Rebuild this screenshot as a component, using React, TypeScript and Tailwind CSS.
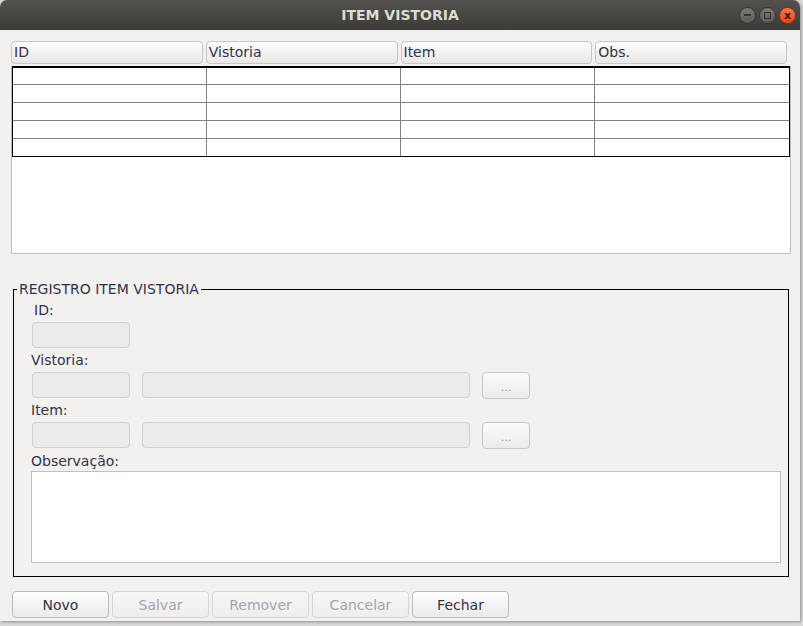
import React from 'react';

const font = { fontFamily: '"DejaVu Sans", "Liberation Sans", sans-serif' };

const columns = ['ID', 'Vistoria', 'Item', 'Obs.'];
const rows = [0, 1, 2, 3, 4];

function Field({ className = '' }: { className?: string }) {
    return <div className={`h-[26px] rounded-[4px] border border-[#d1d0cd] bg-[#ebebea] ${className}`} />;
}

function DotsButton() {
    return (
        <button className="ml-[12px] flex h-[27px] w-[48px] items-end justify-center rounded-[4px] border border-[#c9c8c5] bg-gradient-to-b from-[#fbfbfb] to-[#ecebea] pb-[5px] text-[11px] leading-none text-[#8d95b9]">
            ...
        </button>
    );
}

function ActionButton({ label, disabled }: { label: string; disabled?: boolean }) {
    return (
        <button
            className={`h-[27px] w-[97px] rounded-[4px] border pt-[1px] text-[14px] ${
                disabled
                    ? 'border-[#d6d5d2] bg-gradient-to-b from-[#f6f6f5] to-[#efeeed] text-[#a3a4b6]'
                    : 'border-[#bdbcb9] bg-gradient-to-b from-white to-[#ebeae9] text-[#32324a]'
            }`}
        >
            {label}
        </button>
    );
}

export default function App() {
    return (
        <div className="h-[626px] w-[803px] overflow-hidden bg-[#d9d9d9]" style={font}>
            <div className="flex h-[621px] w-[800px] flex-col overflow-hidden rounded-t-[7px] shadow-[1px_1px_3px_rgba(0,0,0,0.35)]">
                {/* Title bar */}
                <div className="grid h-[30px] grid-cols-[1fr_auto_1fr] items-center bg-gradient-to-b from-[#53524d] to-[#3c3b37]">
                    <div />
                    <span className="text-[14px] font-bold text-[#dfdbd2]">ITEM VISTORIA</span>
                    <div className="flex justify-end gap-[3px] pr-[4px]">
                        <span className="flex h-[17px] w-[17px] items-center justify-center rounded-full border border-[#35342f] bg-gradient-to-b from-[#7b7a74] to-[#5c5b56]">
                            <span className="h-[2px] w-[7px] bg-[#38372f]" />
                        </span>
                        <span className="flex h-[17px] w-[17px] items-center justify-center rounded-full border border-[#35342f] bg-gradient-to-b from-[#7b7a74] to-[#5c5b56]">
                            <span className="h-[7px] w-[7px] border-[1.5px] border-[#38372f]" />
                        </span>
                        <span className="flex h-[17px] w-[17px] items-center justify-center rounded-full border border-[#8a3113] bg-gradient-to-b from-[#f77a4a] to-[#e0461b] text-[11px] font-bold leading-none text-[#3a1a0c]">
                            x
                        </span>
                    </div>
                </div>

                {/* Body */}
                <div className="flex flex-1 flex-col bg-[#f2f1f0]">
                    {/* Table header */}
                    <div className="ml-[11px] mt-[11px] grid h-[23px] w-[776px] grid-cols-4 gap-[3px]">
                        {columns.map((c) => (
                            <div
                                key={c}
                                className="flex items-center rounded-[4px] border border-[#c8c7c4] bg-gradient-to-b from-[#fcfcfc] to-[#e9e8e7] pl-[2px] text-[14px] text-[#32324a]"
                            >
                                {c}
                            </div>
                        ))}
                    </div>

                    {/* Table viewport */}
                    <div className="ml-[11px] mt-[2px] h-[188px] w-[780px] border border-t-0 border-[#c0bfbc] bg-white">
                        <div className="border-x border-t-2 border-black">
                            {rows.map((r) => (
                                <div
                                    key={r}
                                    className={`grid grid-cols-4 border-b ${r === 0 ? 'h-[17px]' : 'h-[18px]'} ${
                                        r === rows.length - 1 ? 'border-black' : 'border-[#808080]'
                                    }`}
                                >
                                    {columns.map((c, i) => (
                                        <div key={c} className={i < 3 ? 'border-r border-[#808080]' : ''} />
                                    ))}
                                </div>
                            ))}
                        </div>
                    </div>

                    {/* Form group */}
                    <fieldset className="ml-[13px] mt-[27px] h-[296px] w-[776px] border border-black">
                        <legend className="ml-[3px] px-[2px] text-[14px] leading-[17px] text-[#32324a]">
                            REGISTRO ITEM VISTORIA
                        </legend>
                        <div className="flex flex-col pl-[17px] pr-[7px] pt-[4px] text-[14px] leading-[17px] text-[#32324a]">
                            <span className="ml-[3px]">ID:</span>
                            <Field className="ml-[1px] mt-[3px] w-[98px]" />

                            <span className="mt-[4px]">Vistoria:</span>
                            <div className="mt-[3px] flex items-start">
                                <Field className="ml-[1px] w-[98px]" />
                                <Field className="ml-[12px] w-[328px]" />
                                <DotsButton />
                            </div>

                            <span className="mt-[3px]">Item:</span>
                            <div className="mt-[3px] flex items-start">
                                <Field className="ml-[1px] w-[98px]" />
                                <Field className="ml-[12px] w-[328px]" />
                                <DotsButton />
                            </div>

                            <span className="mt-[4px]">Observação:</span>
                            <div className="mt-[1px] h-[92px] w-[750px] border border-[#c2c1be] bg-white" />
                        </div>
                    </fieldset>

                    {/* Actions */}
                    <div className="ml-[12px] mt-[14px] flex gap-[3px]">
                        <ActionButton label="Novo" />
                        <ActionButton label="Salvar" disabled />
                        <ActionButton label="Remover" disabled />
                        <ActionButton label="Cancelar" disabled />
                        <ActionButton label="Fechar" />
                    </div>
                </div>
            </div>
        </div>
    );
}
